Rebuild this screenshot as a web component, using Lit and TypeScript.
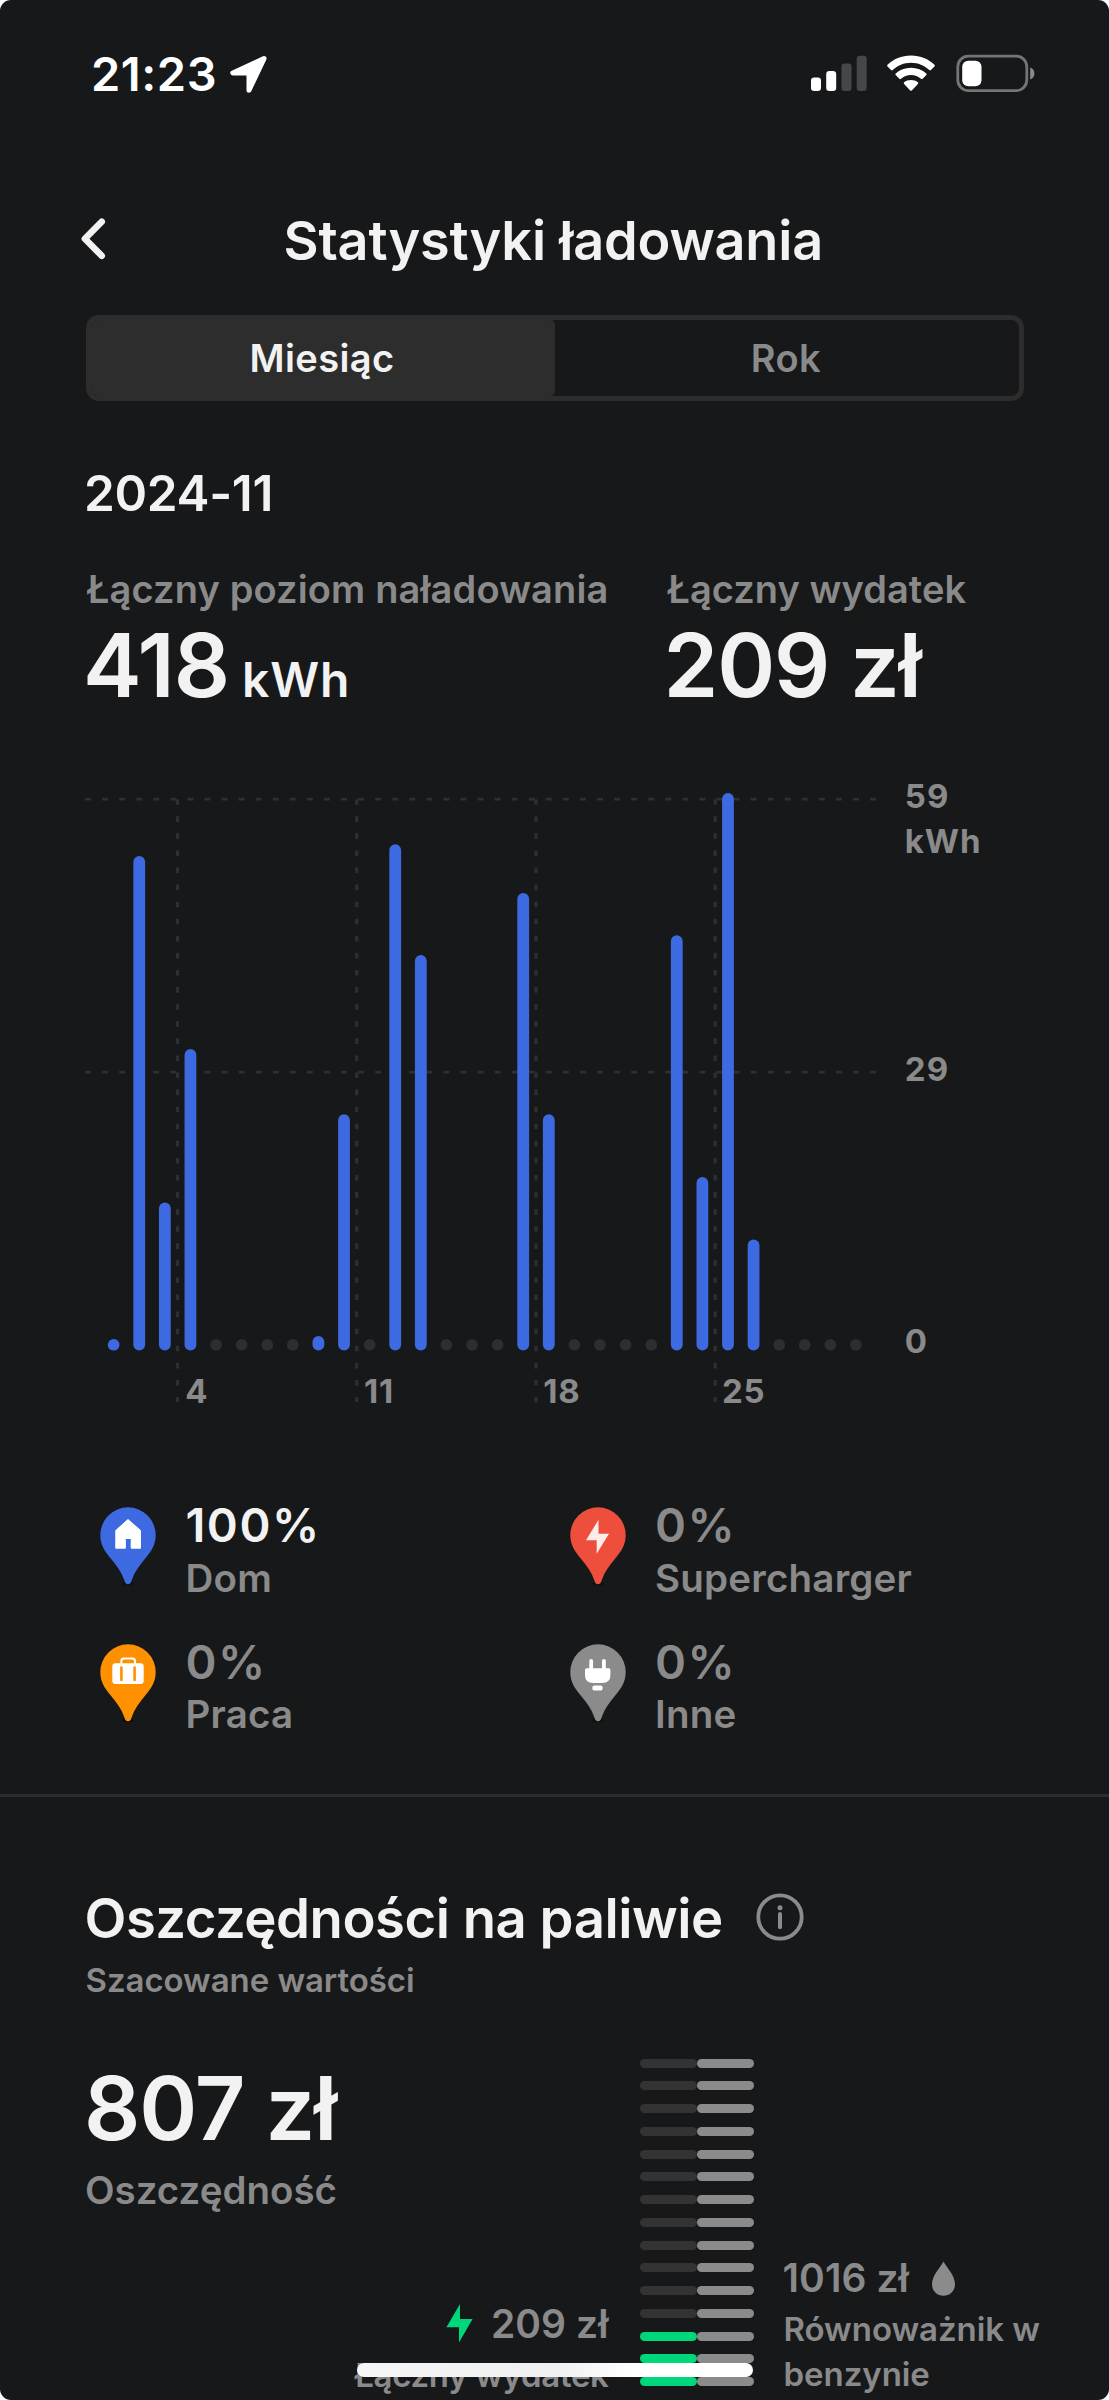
import { LitElement, html, css, svg } from "lit";
import { customElement } from "lit/decorators.js";

const pinPath =
  "M28 1.3A27.7 27.7 0 0 1 55.7 29C55.7 39 51 45.5 45.2 52.5C39 60 34.2 66.5 31.8 74Q30.8 78.2 28 78.2Q25.2 78.2 24.2 74C21.8 66.5 17 60 10.8 52.5C5 45.5 .3 39 .3 29A27.7 27.7 0 0 1 28 1.3Z";

const glyphs = {
  home: svg`<path fill="#fff" stroke="#fff" stroke-width="1" stroke-linejoin="round" d="M28 13.5L40.5 24.4V42.2H31.2V32.5H25.3V42.2H15.8V24.4Z"/>`,
  bolt: svg`<path fill="#feecea" d="M28.5 13.7V27.7H39L26.7 47.8V34.3H16Z"/>`,
  work: svg`<rect x="12.3" y="20.3" width="31.4" height="20.7" rx="3.2" fill="#fff"/>
    <path d="M21.3 21V18.2Q21.3 15.6 24 15.6H32.4Q35 15.6 35 18.2V21" fill="none" stroke="#fff" stroke-width="2"/>
    <path d="M21.4 24.5V37M34.6 24.5V37" stroke="#ff9100" stroke-width="2.6" stroke-linecap="round"/>`,
  plug: svg`<path d="M21.2 18V27M33.9 18V27" stroke="#fff" stroke-width="3.8" stroke-linecap="round"/>
    <path fill="#fff" d="M16.6 25.3H38.8Q40.4 25.3 40.4 27V32Q40.4 40 32 40H23.4Q15 40 15 32V27Q15 25.3 16.6 25.3Z"/>
    <rect x="22.4" y="42.6" width="10.2" height="5" rx="1.8" fill="#fff"/>`,
};

type Source = { icon: keyof typeof glyphs; color: string; share: string; name: string; on?: boolean };

const sources: Source[] = [
  { icon: "home", color: "#3e6ae1", share: "100%", name: "Dom", on: true },
  { icon: "bolt", color: "#ee4f3c", share: "0%", name: "Supercharger" },
  { icon: "work", color: "#ff9100", share: "0%", name: "Praca" },
  { icon: "plug", color: "#8a8b8a", share: "0%", name: "Inne" },
];

/* Top edge of each day's bar in chart units; days left out have no charging. */
const barTops: Record<number, number> = {
  1: 1339, 2: 856, 3: 1202.4, 4: 1049, 9: 1336, 10: 1114.3, 12: 844.2, 13: 955, 17: 893,
  18: 1114.3, 23: 935.2, 24: 1177, 25: 793, 26: 1239.4,
};
const days = Array.from({ length: 30 }, (_, i) => i + 1);
const baseY = 1350.6;

@customElement("usage-chart")
export class UsageChart extends LitElement {
  static styles = css`
    :host { display: block; }
    .plot { display: block; width: 1109px; height: 660px; }
    .axis { fill: #8a8a8a; font: 700 33px Inter, sans-serif; }
    .grid { stroke: #2e2f31; fill: none; }
    .bar { fill: #3e6ae1; }
    .idle { fill: #2e2e2e; }
  `;
  render() {
    const yLabels: [string, number, string][] = [
      ["59", 807.8, "1.3"], ["kWh", 852.8, "1"], ["29", 1080.6, "1.3"], ["0", 1353, "0"],
    ];
    const xLabels: [string, number, number][] = [
      ["4", 185.3, 177.5], ["11", 364, 356.7], ["18", 543.3, 536], ["25", 722, 715.2],
    ];
    return html`<svg class="plot" viewBox="0 760 1109 660">
      ${[799.2, 1072.2].map((y) => svg`<path class="grid" stroke-width="2.8" stroke-dasharray="6 11.067" d="M85 ${y}H877"/>`)}
      ${xLabels.map(([t, x, gx]) => svg`
        <path class="grid" stroke-width="3.2" stroke-dasharray="5.6 11.48" d="M${gx} 799.2V1402"/>
        <text class="axis" x=${x} y="1402.6" letter-spacing=".8">${t}</text>`)}
      ${days.map((d) => {
        const top = barTops[d] ?? 1339;
        return svg`<rect class=${d in barTops ? "bar" : "idle"} x=${107.75 + 25.597 * (d - 1)} y=${top}
          width="11.8" height=${baseY - top} rx="5.9" ry=${Math.min(5.9, (baseY - top) / 2)}/>`;
      })}
      ${yLabels.map(([t, y, ls]) => svg`<text class="axis" x="904.7" y=${y} letter-spacing=${ls}>${t}</text>`)}
    </svg>`;
  }
}

@customElement("app-root")
export class AppRoot extends LitElement {
  static styles = css`
    :host { display: block; background: #fff; }
    * { box-sizing: border-box; }
    svg { display: block; flex: none; }
    .screen {
      position: relative; width: 1109px; height: 2400px; overflow: hidden; background: #17181a;
      border-radius: 11px; color: #f2f2f2; font-family: Inter, "Noto Sans", sans-serif;
      font-weight: 600; white-space: nowrap;
    }
    .status { display: flex; height: 104px; padding: 44px 73px 0 91px; }
    .time { width: 138px; font-size: 47px; line-height: 60px; letter-spacing: .57px; color: #fff; }
    .arrow { margin-top: 11px; }
    .indicators { display: flex; margin: 10px 0 0 auto; }
    .wifi { margin-left: 19px; }
    .battery { margin-left: 20px; }
    .header { display: flex; align-items: flex-start; margin-top: 103px; padding-left: 80px; height: 66px; }
    .back { margin-top: 10px; }
    .title { margin: 1px 0 0 175.5px; font-size: 54px; line-height: 66px; font-weight: 600; letter-spacing: -.18px; }
    .tabs { display: flex; width: 938px; height: 86px; margin: 42px 0 0 86px; border: 5px solid #2d2d2d; border-radius: 13px; overflow: hidden; }
    .tab { flex: 1; display: flex; align-items: center; justify-content: center; padding-right: 2px; font-size: 38px; letter-spacing: .4px; color: #8a8a8a; }
    .tab.active { background: #2d2d2d; border-radius: 0 5px 5px 0; color: #f2f2f2; }
    .period { margin: 62px 0 0 84px; font-size: 49.5px; line-height: 60px; letter-spacing: -.35px; }
    .totals { display: grid; grid-template-columns: 580.5px 1fr; margin: 43px 0 0 83px; height: 194px; }
    .label { color: #8a8a8a; font-size: 38px; line-height: 46px; padding-left: 3.5px; }
    .label.wide { letter-spacing: .14px; }
    .label.short { letter-spacing: .05px; }
    .value { display: flex; align-items: baseline; margin-top: 9px; font-size: 88px; line-height: 88px; letter-spacing: -1.2px; }
    .amount { width: 159px; }
    .unit { font-size: 48px; letter-spacing: .86px; }
    .legend { display: grid; grid-template-columns: 469.6px 1fr; grid-auto-rows: 136.7px; margin: 80px 0 0 100px; height: 294px; }
    .source { display: flex; color: #8a8a8a; }
    .pin { margin: 6px 29.5px 0 0; overflow: visible; }
    .share { font-size: 47px; line-height: 50px; letter-spacing: 1.5px; }
    .source.on .share { color: #f2f2f2; }
    .name { margin-top: 3.8px; font-size: 38.5px; line-height: 48px; letter-spacing: .2px; }
    .divider { height: 3px; background: #2d2d2f; }
    .fuel-head { display: flex; height: 66px; margin: 87.5px 0 0 84.5px; }
    .fuel-title { width: 671px; margin: 0; font-size: 54.5px; line-height: 66px; font-weight: 600; letter-spacing: -.5px; }
    .info { margin-top: 8px; }
    .fuel-sub { margin: 7px 0 0 85.5px; color: #8a8a8a; font-size: 33px; line-height: 44px; letter-spacing: -.06px; }
    .compare { display: grid; grid-template-columns: 524.5px 114px 1fr; column-gap: 31.5px; margin-left: 84px; }
    .saved { padding-top: 62px; }
    .saved-value { font-size: 88px; line-height: 88px; letter-spacing: -1px; }
    .saved-label { margin-top: 15.7px; padding-left: 1px; color: #8a8a8a; font-size: 38.5px; line-height: 46px; letter-spacing: 0; }
    .spent { display: flex; justify-content: flex-end; margin-top: 87.5px; }
    .bolt { margin: 3.5px 18px 0 0; }
    .cost { color: #8a8a8a; font-size: 39px; line-height: 46px; letter-spacing: .08px; }
    .cost-label { margin-top: 6px; text-align: right; color: #8a8a8a; font-size: 33px; line-height: 44px; letter-spacing: -.34px; }
    .stack { display: grid; grid-template-columns: 1fr 1fr; grid-auto-rows: 9px; row-gap: 13.75px; padding-top: 57px; }
    .seg { border-radius: 4.5px; background: #8a8b8a; }
    .seg.off { background: #333; }
    .seg.green { background: #00d67a; }
    .petrol { padding-top: 253px; margin-left: -3px; }
    .petrol-cost { display: flex; }
    .drop { margin: 6px 0 0 22px; }
    .petrol-label { margin-top: 6px; padding-left: 1px; color: #8a8a8a; font-size: 33px; line-height: 45.6px; letter-spacing: -.05px; }
    .home-bar { position: absolute; left: 357px; top: 2362.7px; width: 396px; height: 14.2px; border-radius: 7px; background: linear-gradient(90deg, #f6f6f6 0%, #f0f0f0 50%, #fff 70%); }
  `;

  render() {
    return html`<div class="screen">
      <div class="status">
        <div class="time">21:23</div>
        <svg class="arrow" width="38" height="38" viewBox="0 0 38 38">
          <path fill="#fff" stroke="#fff" stroke-width="5" stroke-linejoin="round" d="M35 3.6L3.8 17.9H20V35.2Z"/>
        </svg>
        <div class="indicators">
          <svg width="57" height="38" viewBox="0 0 57 38">
            <rect x="1" y="23.5" width="10" height="13.5" rx="3.2" fill="#fff"/>
            <rect x="16.2" y="17" width="10" height="20" rx="3.2" fill="#fff"/>
            <rect x="31.5" y="9.5" width="10" height="27.5" rx="3.2" fill="#464749"/>
            <rect x="46.7" y="1.7" width="10" height="35.3" rx="3.2" fill="#464749"/>
          </svg>
          <svg class="wifi" width="50" height="38" viewBox="0 0 50 38">
            <path fill="#fff" d="M25 1.6C34.5 1.6 42.6 5.2 48.5 10.8Q49.3 11.6 48.5 12.4L44.9 16Q44.1 16.8 43.3 16C38.4 11.5 32.2 8.7 25 8.7S11.6 11.5 6.7 16Q5.9 16.8 5.1 16L1.5 12.4Q.7 11.6 1.5 10.8C7.4 5.2 15.5 1.6 25 1.6Z"/>
            <path fill="#fff" d="M25 13.8C31 13.8 36.2 15.9 40.3 19.5Q41.1 20.3 40.3 21.1L36.7 24.7Q35.9 25.5 35 24.8C32.2 22.3 29 20.9 25 20.9S17.8 22.3 15 24.8Q14.1 25.5 13.3 24.7L9.7 21.1Q8.9 20.3 9.7 19.5C13.8 15.9 19 13.8 25 13.8Z"/>
            <path fill="#fff" d="M25 26C27.7 26 30 26.9 31.9 28.3Q32.7 29.1 31.9 29.9L26 36.2Q25 37.2 24 36.2L18.1 29.9Q17.3 29.1 18.1 28.3C20 26.9 22.3 26 25 26Z"/>
          </svg>
          <svg class="battery" width="80" height="39" viewBox="0 0 80 39">
            <rect x="1.8" y="2.2" width="69" height="34.4" rx="10.5" fill="none" stroke="#747576" stroke-width="2.8"/>
            <rect x="6.2" y="6.8" width="19.3" height="25.5" rx="6" fill="#fff"/>
            <path fill="#8a8b8b" d="M74.2 13.6Q78.4 15.2 78.4 19.5T74.2 25.4Z"/>
          </svg>
        </div>
      </div>

      <div class="header">
        <svg class="back" width="28" height="44" viewBox="0 0 28 44">
          <path d="M21.7 4.7L4.9 21.7L21.7 38.8" fill="none" stroke="#f2f2f2" stroke-width="6.6" stroke-linecap="round" stroke-linejoin="round"/>
        </svg>
        <h1 class="title">Statystyki ładowania</h1>
      </div>

      <div class="tabs">
        <div class="tab active">Miesiąc</div>
        <div class="tab">Rok</div>
      </div>

      <div class="period">2024-11</div>
      <div class="totals">
        <div>
          <div class="label wide">Łączny poziom naładowania</div>
          <div class="value"><span class="amount">418</span><span class="unit">kWh</span></div>
        </div>
        <div>
          <div class="label short">Łączny wydatek</div>
          <div class="value">209 zł</div>
        </div>
      </div>

      <usage-chart></usage-chart>

      <div class="legend">
        ${sources.map((s) => html`<div class="source ${s.on ? "on" : ""}">
          <svg class="pin" width="56" height="80" viewBox="0 0 56 80">
            <ellipse cx="28" cy="77.3" rx="6" ry="2" fill="#0e0f10"/>
            <path d=${pinPath} fill=${s.color}/>
            ${glyphs[s.icon]}
          </svg>
          <div>
            <div class="share">${s.share}</div>
            <div class="name">${s.name}</div>
          </div>
        </div>`)}
      </div>

      <div class="divider"></div>

      <div class="fuel-head">
        <h2 class="fuel-title">Oszczędności na paliwie</h2>
        <svg class="info" width="48" height="48" viewBox="0 0 48 48">
          <circle cx="24" cy="24" r="21.7" fill="none" stroke="#8a8b8a" stroke-width="3.8"/>
          <circle cx="24" cy="14.7" r="2.5" fill="#8a8b8a"/>
          <path d="M24 21V34.3" stroke="#8a8b8a" stroke-width="4" stroke-linecap="round"/>
        </svg>
      </div>
      <div class="fuel-sub">Szacowane wartości</div>

      <div class="compare">
        <div class="saved">
          <div class="saved-value">807 zł</div>
          <div class="saved-label">Oszczędność</div>
          <div class="spent">
            <svg class="bolt" width="27" height="39" viewBox="0 0 27 39">
              <path fill="#00d67a" d="M14 0V15H26.6L13 38.5V23.2H.4Z"/>
            </svg>
            <div class="cost">209 zł</div>
          </div>
          <div class="cost-label">Łączny wydatek</div>
        </div>
        <div class="stack">
          ${Array.from({ length: 15 }, (_, i) => html`
            <div class="seg ${i < 12 ? "off" : "green"}"></div><div class="seg"></div>`)}
        </div>
        <div class="petrol">
          <div class="petrol-cost">
            <div class="cost">1016 zł</div>
            <svg class="drop" width="25" height="36" viewBox="0 0 25 36">
              <path fill="#8a8b8a" d="M12.5 .5C15.5 6.5 24 14 24 23.3C24 30 19 34.7 12.5 34.7S1 30 1 23.3C1 14 9.5 6.5 12.5 .5Z"/>
            </svg>
          </div>
          <div class="petrol-label">Równoważnik w<br />benzynie</div>
        </div>
      </div>
      <div class="home-bar"></div>
    </div>`;
  }
}
